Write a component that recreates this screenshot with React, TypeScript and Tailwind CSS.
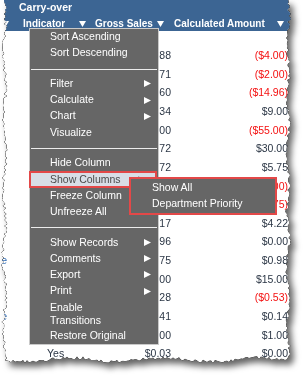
import React from "react"

type Row = { a?: string; ind: string; gross: string; calc: string; neg?: boolean }

const rows: Row[] = [
  { ind: "No", gross: "$1.88", calc: "($4.00)", neg: true },
  { ind: "No", gross: "$2.71", calc: "($2.00)", neg: true },
  { ind: "No", gross: "$3.60", calc: "($14.96)", neg: true },
  { ind: "Yes", gross: "$9.34", calc: "$9.00" },
  { ind: "No", gross: "$5.00", calc: "($55.00)", neg: true },
  { ind: "Yes", gross: "$30.72", calc: "$30.00" },
  { ind: "Yes", gross: "$5.72", calc: "$5.75" },
  { ind: "No", gross: "$1.10", calc: "($1.00)", neg: true },
  { ind: "No", gross: "$0.75", calc: "($0.75)", neg: true },
  { ind: "Yes", gross: "$4.17", calc: "$4.22" },
  { ind: "Yes", gross: "$0.96", calc: "$0.00" },
  { a: "Store", ind: "Yes", gross: "$0.75", calc: "$0.98" },
  { ind: "Yes", gross: "$15.00", calc: "$15.00" },
  { ind: "No", gross: "$0.28", calc: "($0.53)", neg: true },
  { a: "Store", ind: "Yes", gross: "$0.41", calc: "$0.14" },
  { ind: "Yes", gross: "$1.00", calc: "$1.00" },
  { ind: "Yes", gross: "$0.03", calc: "$0.00" },
]

// deterministic jitter for the torn paper edge
function rnd(i: number, s: number) {
  const v = Math.sin(i * 12.9898 + s * 78.233) * 43758.5453
  return v - Math.floor(v)
}

function tornEdge() {
  const pts: string[] = ["4px 0px", "288px 0px"]
  for (let y = 2; y < 358; y += 2) {
    const x = 288 + Math.sin(y / 9) * 1.2 + (rnd(y, 1) - 0.5) * 3.4
    pts.push(`${x.toFixed(1)}px ${y}px`)
  }
  for (let x = 287; x > 4; x -= 2) {
    const y = 359.5 + Math.sin(x / 15) * 2 + (rnd(x, 2) - 0.5) * 3.4
    pts.push(`${x}px ${y.toFixed(1)}px`)
  }
  for (let y = 358; y > 0; y -= 2) {
    const x = 4.5 + Math.sin(y / 11) * 1.5 + (rnd(y, 3) - 0.5) * 3.4
    pts.push(`${x.toFixed(1)}px ${y}px`)
  }
  return `polygon(${pts.join(",")})`
}

function Down() {
  return (
    <svg width="7" height="6" viewBox="0 0 7 6" className="shrink-0">
      <polygon points="0,0 7,0 3.5,6" fill="#fff" />
    </svg>
  )
}

function Right({ color = "#fff" }: { color?: string }) {
  return (
    <svg width="7" height="7" viewBox="0 0 7 7" className="shrink-0">
      <polygon points="0,0 7,3.5 0,7" fill={color} />
    </svg>
  )
}

function Item({ label, sub }: { label: string; sub?: boolean }) {
  return (
    <div className="flex h-[16.2px] items-center justify-between pl-[20px] pr-[7px] text-white">
      <span>{label}</span>
      {sub && <Right />}
    </div>
  )
}

function Sep() {
  return (
    <div className="flex h-[14.5px] items-start px-px pt-[7.5px]">
      <div className="h-px w-full bg-[#ececec]" />
    </div>
  )
}

export default function App() {
  return (
    <div className="h-[381px] w-[306px] bg-white font-['Liberation_Sans',Arial,sans-serif]">
      <div className="[filter:drop-shadow(0_0_0.5px_#000)_drop-shadow(0_0_0.4px_#000)_drop-shadow(4px_5px_3px_rgba(0,0,0,0.6))]">
        <div className="relative h-[366px] w-[296px] bg-white" style={{ clipPath: tornEdge() }}>
          {/* header */}
          <div className="h-[31px] bg-[#3c6593] text-[10px] font-bold text-white">
            <div className="flex h-[16px] items-center pl-[19px] text-[10.5px]">Carry-over</div>
            <div className="flex h-[15px] items-center">
              <div className="flex w-[10px] justify-end pr-px">
                <Down />
              </div>
              <div className="flex w-[78px] items-center justify-between pl-[13px] pr-[2px]">
                <span>Indicator</span>
                <Down />
              </div>
              <div className="flex w-[78px] items-center justify-between pl-[7px] pr-[2px]">
                <span>Gross Sales</span>
                <Down />
              </div>
              <div className="flex w-[122px] items-center justify-between pl-[8px] pr-[4px]">
                <span>Calculated Amount</span>
                <Down />
              </div>
            </div>
          </div>

          {/* body */}
          <div className="pt-[15.7px] text-[10.5px] text-[#2b3645]">
            {rows.map((r, i) => (
              <div key={i} className="flex h-[18.625px] items-center whitespace-nowrap">
                <div className="flex w-[8px] justify-end overflow-hidden pr-px text-[#2f6cb5]">{r.a}</div>
                <div className="w-[120px] pl-[39px]">{r.ind}</div>
                <div className="w-[43px] text-right">{r.gross}</div>
                <div className={`w-[117px] text-right ${r.neg ? "text-[#f41010]" : ""}`}>{r.calc}</div>
              </div>
            ))}
          </div>

          {/* context menu */}
          <div className="absolute left-[29px] top-[28px] w-[130px] border border-[#c9c9c9] bg-[#666666] text-[10.5px]">
            <Item label="Sort Ascending" />
            <Item label="Sort Descending" />
            <Sep />
            <Item label="Filter" sub />
            <Item label="Calculate" sub />
            <Item label="Chart" sub />
            <Item label="Visualize" />
            <Sep />
            <Item label="Hide Column" />
            <div className="-ml-px mr-px flex h-[16.2px] items-center justify-between border-2 border-[#e34848] bg-[#d8dee6] pl-[19px] pr-[10px] text-[#4a4a4a]">
              <span>Show Columns</span>
              <Right color="#9aa0a8" />
            </div>
            <Item label="Freeze Column" />
            <Item label="Unfreeze All" />
            <Sep />
            <Item label="Show Records" sub />
            <Item label="Comments" sub />
            <Item label="Export" sub />
            <Item label="Print" sub />
            <div className="py-[1.5px] pl-[20px] leading-[13px] text-white">
              <div>Enable</div>
              <div>Transitions</div>
            </div>
            <Item label="Restore Original" />
          </div>

          {/* submenu */}
          <div className="absolute left-[129px] top-[177px] w-[148px] border-2 border-[#e34848] bg-[#666666] py-px text-[10.5px] text-white">
            <div className="flex h-[16px] items-center pl-[21px]">Show All</div>
            <div className="flex h-[16px] items-center pl-[21px]">Department Priority</div>
          </div>
        </div>
      </div>
    </div>
  )
}
